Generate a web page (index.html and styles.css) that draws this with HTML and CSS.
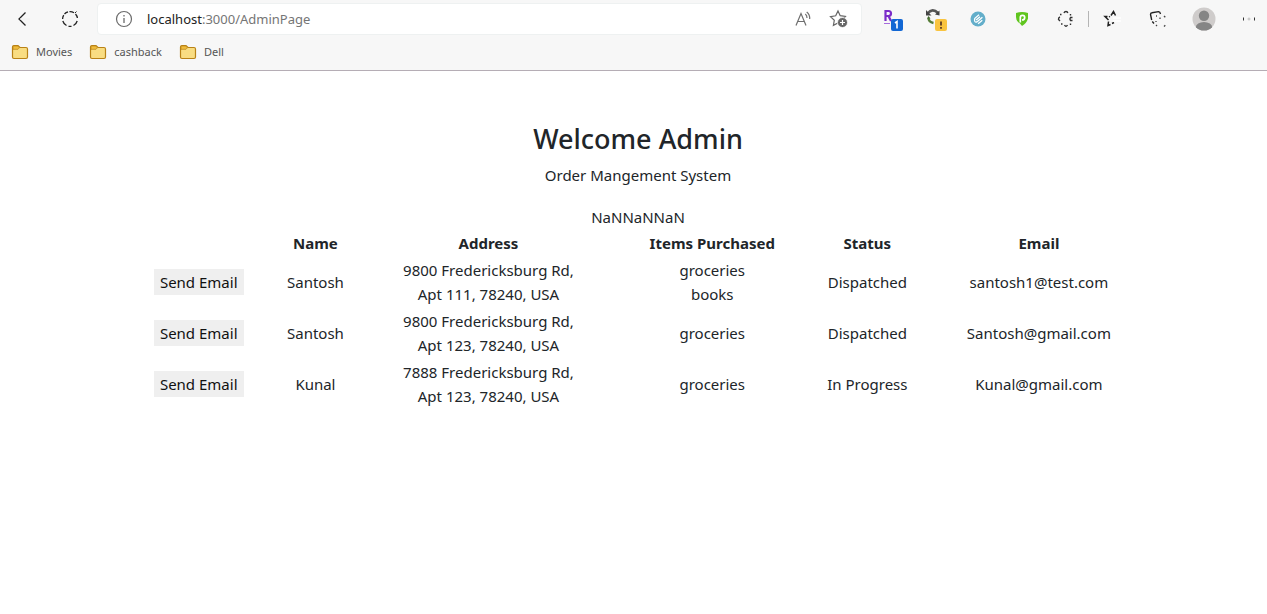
FILE: index.html
```html
<!DOCTYPE html>
<html lang="en">
<head>
<meta charset="utf-8">
<title>Admin Page</title>
<link rel="stylesheet" href="styles.css">
</head>
<body>
<header class="chrome">
  <div class="toolbar">
    <div class="nav">
      <button class="tool" type="button" aria-label="Back"><svg width="18" height="18" viewBox="0 0 18 18"><path d="M11.500 2.500 5 9l6.500 6.500" fill="none" stroke="#222" stroke-width="1.300"/><path d="M6 9h10" stroke="#eee"/></svg></button>
      <button class="tool" type="button" aria-label="Refresh"><svg width="18" height="18" viewBox="0 0 18 18" fill="none" stroke="#222" stroke-width="1.300"><path d="M3.500 4A7.400 7.400 0 0 1 7 1.900M8.500 1.600A7.400 7.400 0 0 1 13 2.700M14.500 4A7.400 7.400 0 0 1 16.400 8M16.200 11A7.400 7.400 0 0 1 12.500 15.500M10.500 16.300H7.500M5.500 15.500A7.400 7.400 0 0 1 1.800 11M1.600 9A7.400 7.400 0 0 1 2.700 5.200"/><path d="m14 3 1.500-1.500" stroke-width="1"/></svg></button>
    </div>
    <div class="address">
      <svg width="18" height="18" viewBox="0 0 18 18" fill="none" stroke="#6b6b6b"><circle cx="9" cy="9" r="7.500" stroke-width="1.200"/><path d="M9 8v5M9 5v1.500" stroke-width="1.300"/></svg>
      <div class="url"><span class="host">localhost</span>:3000/AdminPage</div>
      <button class="inner" type="button" aria-label="Read aloud"><svg width="18" height="18" viewBox="0 0 18 18" fill="none" stroke="#6f6f6f" stroke-width="1.200"><path d="M2 15.500 7 3.500l5 12M3.800 11.500h6.400M11.300 4q1.800 1.400 1.700 4M12.700 2q3.300 2.500 3 7"/></svg></button>
      <button class="inner" type="button" aria-label="Add to favorites"><svg width="20" height="20" viewBox="0 0 20 20"><path d="m9 2 2.200 4.700 5.200.8-3.800 3.700.9 5.100L9 14l-4.600 2.400.9-5.100-3.800-3.700 5.200-.8z" fill="#fff" stroke="#666" stroke-width="1.200"/><circle cx="13.500" cy="13.500" r="5" fill="#666" stroke="#fff" stroke-width=".8"/><path d="M11 13.500h5M13.500 11v5" stroke="#fff" stroke-width="1.200"/></svg></button>
    </div>
    <div class="extensions">
      <button class="tool" type="button" aria-label="Rewards, 1 notification"><svg width="26" height="26" viewBox="-6 -2 26 26"><path d="M2.500 13V3h3a2.500 2.500 0 0 1 0 5h-3M5.500 8 8 13" fill="none" stroke="#7b2cc9" stroke-width="2.200"/><path d="M1 15.500h6" stroke="#a66bdd" stroke-width="1"/><rect x="8" y="11" width="12" height="12" rx="2" fill="#1267d4"/><path d="m12 15 2-1.500V20.500" fill="none" stroke="#fff" stroke-width="1.600"/></svg></button>
      <button class="tool" type="button" aria-label="Sync, warning"><svg width="26" height="26" viewBox="-4 -2 26 26"><path d="M2.500 5.500Q7.500-.5 13 5" fill="none" stroke="#555" stroke-width="2.600"/><path d="M1 2v5.500h5.500zM14.500 2.500v5L10 6.500z" fill="#444"/><path d="M3.500 10q0 4 5 5" fill="none" stroke="#557c37" stroke-width="2.400"/><path d="m2 10.500 1.500-2.500 2 2.500z" fill="#41672d"/><rect x="10" y="11" width="12" height="12" rx="2" fill="#f9c440"/><path d="M16 13.500v4M16 19v1.700" stroke="#4b2c20" stroke-width="1.600"/></svg></button>
      <button class="tool" type="button" aria-label="Link extension"><svg width="16" height="16" viewBox="0 0 16 16"><circle cx="8" cy="8" r="7.500" fill="#63aeca"/><g transform="rotate(-40 8 8)" fill="none" stroke="#fff" stroke-width="1.300"><path d="M12.500 9.500H6Q4 9.500 4 8t2-2.500h5.500"/><path d="M6 7.500h5M5 11.700h5.500"/></g></svg></button>
      <button class="tool" type="button" aria-label="Privacy shield"><svg width="16" height="16" viewBox="0 0 16 16"><path d="M2 2q6-2 12 0v5.500q-1.500 5-6 7.500l-2-2.500Q2 10 2 6z" fill="#5fc51e"/><path d="M6.300 11.500V6.500a2.200 2.200 0 0 1 4.400 0q0 2.500-2.700 2.500" fill="none" stroke="#fff" stroke-width="1.700"/></svg></button>
      <button class="tool" type="button" aria-label="Browser extensions"><svg width="18" height="18" viewBox="0 0 18 18" fill="none" stroke="#333" stroke-width="1.400"><path d="M7 3q.5-1.500 2-1.500T10.800 3M3 4.500h1.500M13.500 4v1.500M3 7Q1.300 7.500 1.500 9.500L3 11M15.500 7.500H13.500Q12.300 9 13.500 10.500h2M4 14h1.500M7.500 15q1.500 2.500 3 0M13.500 13.500V15"/></svg></button>
      <span class="divider"></span>
    </div>
    <div class="system">
      <button class="tool" type="button" aria-label="Favorites"><svg width="18" height="18" viewBox="0 0 18 18" fill="none" stroke="#222" stroke-width="1.500"><path d="M8 5.500 10.500 1.500 12.500 5.500M7 6.300 6 7M4.500 6.500H2L5.500 10M5.500 11.500 5 15.500 7.500 14.500M9 13.500l2-1"/><path d="M10 8h8M10 11h8" stroke="#fff"/></svg></button>
      <button class="tool" type="button" aria-label="Collections"><svg width="18" height="18" viewBox="0 0 18 18" fill="none" stroke="#222" stroke-width="1.400"><path d="m5 13.500-1.700-2M2.700 10 1.500 4.500Q1.500 3 3 2.800L9.500 1.600Q11 1.500 11.500 4"/><path d="M7 6h1M11 7.500V9M15 6l1.300 1.300M7 11v1M7 15l1 1M15 16.500l1.300-1.200" stroke="#444" stroke-width="1.300"/></svg></button>
      <button class="tool" type="button" aria-label="Profile"><svg width="24" height="24" viewBox="0 0 24 24"><defs><clipPath id="avatar"><circle cx="12" cy="12" r="11.500"/></clipPath></defs><g clip-path="url(#avatar)"><path d="M0 0h24v24H0z" fill="#cfcccb"/><circle cx="12" cy="8.700" r="5.200" fill="#858585"/><ellipse cx="12" cy="20.500" rx="8.200" ry="5.500" fill="#858585"/></g></svg></button>
      <button class="tool more" type="button" aria-label="Settings and more"><svg width="16" height="6" viewBox="0 0 16 6" fill="none" stroke="#333"><path d="M2.500 1.500v3M13.500 1.500v3"/><circle cx="8" cy="3" r="1" stroke="#bbb"/></svg></button>
    </div>
  </div>
  <nav class="bookmarks">
    <a class="bookmark" href="#"><svg width="18" height="16" viewBox="0 0 18 16"><path d="M1.500 3Q1.500 1.500 3 1.500h4L9 3.500H15Q16.500 3.500 16.500 5v8Q16.500 14.500 15 14.500H3Q1.500 14.500 1.500 13z" fill="#f9dd82" stroke="#b98216" stroke-width="1.200"/><path d="M2 2h5l1.400 1.800L7 5.300H2z" fill="#f0bd3c" stroke="#b98216" stroke-width=".7"/></svg>Movies</a>
    <a class="bookmark" href="#"><svg width="18" height="16" viewBox="0 0 18 16"><path d="M1.500 3Q1.500 1.500 3 1.500h4L9 3.500H15Q16.500 3.500 16.500 5v8Q16.500 14.500 15 14.500H3Q1.500 14.500 1.500 13z" fill="#f9dd82" stroke="#b98216" stroke-width="1.200"/><path d="M2 2h5l1.400 1.800L7 5.300H2z" fill="#f0bd3c" stroke="#b98216" stroke-width=".7"/></svg>cashback</a>
    <a class="bookmark" href="#"><svg width="18" height="16" viewBox="0 0 18 16"><path d="M1.500 3Q1.500 1.500 3 1.500h4L9 3.500H15Q16.500 3.500 16.500 5v8Q16.500 14.500 15 14.500H3Q1.500 14.500 1.500 13z" fill="#f9dd82" stroke="#b98216" stroke-width="1.200"/><path d="M2 2h5l1.400 1.800L7 5.300H2z" fill="#f0bd3c" stroke="#b98216" stroke-width=".7"/></svg>Dell</a>
  </nav>
</header>
<main class="page">
  <h1 class="title">Welcome Admin</h1>
  <p class="subtitle">Order Mangement System</p>
  <div class="total">NaNNaNNaN</div>
  <table class="orders">
    <colgroup><col class="c-action"><col class="c-name"><col class="c-address"><col class="c-items"><col class="c-status"><col class="c-email"></colgroup>
    <thead>
      <tr><td></td><th scope="col">Name</th><th scope="col">Address</th><th scope="col">Items Purchased</th><th scope="col">Status</th><th scope="col">Email</th></tr>
    </thead>
    <tbody>
      <tr><td><button class="send" type="button">Send Email</button></td><td>Santosh</td><td>9800 Fredericksburg Rd,<br>Apt 111, 78240, USA</td><td>groceries<br>books</td><td>Dispatched</td><td>santosh1@test.com</td></tr>
      <tr><td><button class="send" type="button">Send Email</button></td><td>Santosh</td><td>9800 Fredericksburg Rd,<br>Apt 123, 78240, USA</td><td>groceries</td><td>Dispatched</td><td>Santosh@gmail.com</td></tr>
      <tr><td><button class="send" type="button">Send Email</button></td><td>Kunal</td><td>7888 Fredericksburg Rd,<br>Apt 123, 78240, USA</td><td>groceries</td><td>In Progress</td><td>Kunal@gmail.com</td></tr>
    </tbody>
  </table>
</main>
</body>
</html>
```

FILE: styles.css
```css
* { box-sizing: border-box; }
body {
  margin: 0;
  background: #fff;
  color: #212529;
  font: 15px/24px "Noto Sans", "Open Sans", sans-serif;
}
button { border: 0; padding: 0; background: none; color: inherit; font: inherit; }
svg { display: block; flex: none; }

.chrome { background: #f7f7f7; border-bottom: 1px solid #b5adb5; }
.toolbar { display: flex; align-items: center; padding-top: 3px; }
.nav, .extensions, .system { display: flex; align-items: center; }
.nav { gap: 2px; padding-right: 5px; }
.tool { display: flex; align-items: center; justify-content: center; width: 46px; height: 32px; }
.nav .tool { width: 45px; }
.extensions { padding-left: 6px; }
.extensions .tool { width: 44px; }
.divider { width: 1px; height: 16px; background: #b5b5b5; }
.system .more { width: 40px; padding-left: 4px; }

.address {
  flex: 1;
  display: flex;
  align-items: center;
  height: 32px;
  padding: 0 4px 0 17px;
  background: #fff;
  border: 1px solid #eef1f1;
  border-radius: 4px;
}
.url { flex: 1; padding-left: 14px; color: #757575; font-size: 13px; }
.host { color: #222; }
.inner { display: flex; justify-content: center; width: 36px; }

.bookmarks { display: flex; gap: 17px; height: 35px; padding: 5px 11px 0; }
.bookmark {
  display: flex;
  align-items: center;
  gap: 7px;
  height: 24px;
  color: #555;
  font-size: 11px;
  text-decoration: none;
}

.page { padding: 51px 0 24px 9px; text-align: center; }
.title { margin: 0 0 7px; font-size: 27px; font-weight: 500; line-height: 34px; }
.subtitle { margin: 0 0 18px; }
.total { padding-bottom: 1px; }
.orders {
  table-layout: fixed;
  width: 81.400%;
  margin: 0 auto;
  border-collapse: collapse;
}
.orders th, .orders td { padding: 1px; }
.orders tbody tr { height: 51px; }
.c-action { width: 14.200%; }
.c-name { width: 8.600%; }
.c-address { width: 25.200%; }
.c-items { width: 18.500%; }
.c-status { width: 11.800%; }
.c-email { width: 21.700%; }
.send { padding: 1px 6px; background: #efefef; color: #111; }
```
